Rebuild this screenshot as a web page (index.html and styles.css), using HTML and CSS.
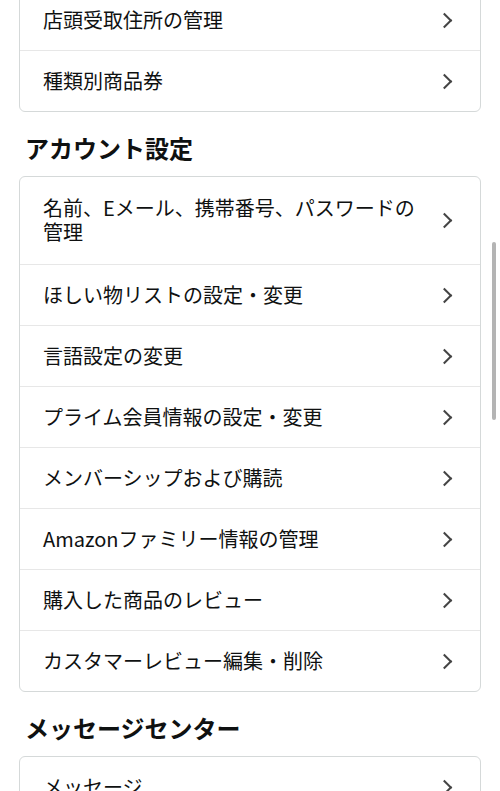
FILE: index.html
```html
<!DOCTYPE html>
<html lang="ja">
<head>
    <meta charset="UTF-8">
    <meta name="viewport" content="width=device-width, initial-scale=1.0">
    <title>アカウントサービス</title>
    <link rel="stylesheet" href="styles.css">
</head>
<body>

    <!-- 注文関連 -->
    <div class="card card-first">
        <a class="row" href="#"><span class="row-text">店頭受取住所の管理</span><span class="chevron"></span></a>
        <a class="row" href="#"><span class="row-text">種類別商品券</span><span class="chevron"></span></a>
    </div>

    <!-- アカウント設定 -->
    <h2 class="section-title">アカウント設定</h2>
    <div class="card">
        <a class="row row-tall" href="#"><span class="row-text">名前、Eメール、携帯番号、パスワードの管理</span><span class="chevron"></span></a>
        <a class="row" href="#"><span class="row-text">ほしい物リストの設定・変更</span><span class="chevron"></span></a>
        <a class="row" href="#"><span class="row-text">言語設定の変更</span><span class="chevron"></span></a>
        <a class="row" href="#"><span class="row-text">プライム会員情報の設定・変更</span><span class="chevron"></span></a>
        <a class="row" href="#"><span class="row-text">メンバーシップおよび購読</span><span class="chevron"></span></a>
        <a class="row" href="#"><span class="row-text">Amazonファミリー情報の管理</span><span class="chevron"></span></a>
        <a class="row" href="#"><span class="row-text">購入した商品のレビュー</span><span class="chevron"></span></a>
        <a class="row" href="#"><span class="row-text">カスタマーレビュー編集・削除</span><span class="chevron"></span></a>
    </div>

    <!-- メッセージセンター -->
    <h2 class="section-title">メッセージセンター</h2>
    <div class="card">
        <a class="row" href="#"><span class="row-text">メッセージ</span><span class="chevron"></span></a>
        <a class="row" href="#"><span class="row-text">通知設定</span><span class="chevron"></span></a>
    </div>

    <div class="scroll-thumb"></div>

</body>
</html>
```

FILE: styles.css
```css
/* 全体 */
body {
    margin: 0;
    padding: 0 19px;
    background: #fff;
    color: #0f1111;
    font-family: "Noto Sans CJK JP", "Noto Sans", sans-serif;
    overflow: hidden;
}

/* 見出し */
.section-title {
    margin: 21px 0 13px 6px;
    font-size: 24px;
    line-height: 30px;
    font-weight: 700;
}

/* カード */
.card {
    border: 1px solid #d5d9d9;
    border-radius: 6px;
    background: #fff;
}

.card-first {
    margin-top: -11px;
}

.row {
    display: flex;
    align-items: center;
    justify-content: space-between;
    padding: 18px 28px 18px 23px;
    border-bottom: 1px solid #e7e7e7;
    color: inherit;
    text-decoration: none;
    font-size: 20px;
    line-height: 24px;
}

.row:last-child {
    border-bottom: none;
}

.row-tall {
    padding-top: 19px;
    padding-bottom: 20px;
}

.row-text {
    flex: 1;
    padding-right: 12px;
}

/* 矢印 */
.chevron {
    width: 9px;
    height: 9px;
    border-top: 2px solid #444;
    border-right: 2px solid #444;
    transform: rotate(45deg);
    flex-shrink: 0;
    margin-right: 2px;
}

/* スクロールバー */
.scroll-thumb {
    position: fixed;
    top: 242px;
    right: 4px;
    width: 4px;
    height: 178px;
    border-radius: 2px;
    background: #b4b4b4;
}
```
